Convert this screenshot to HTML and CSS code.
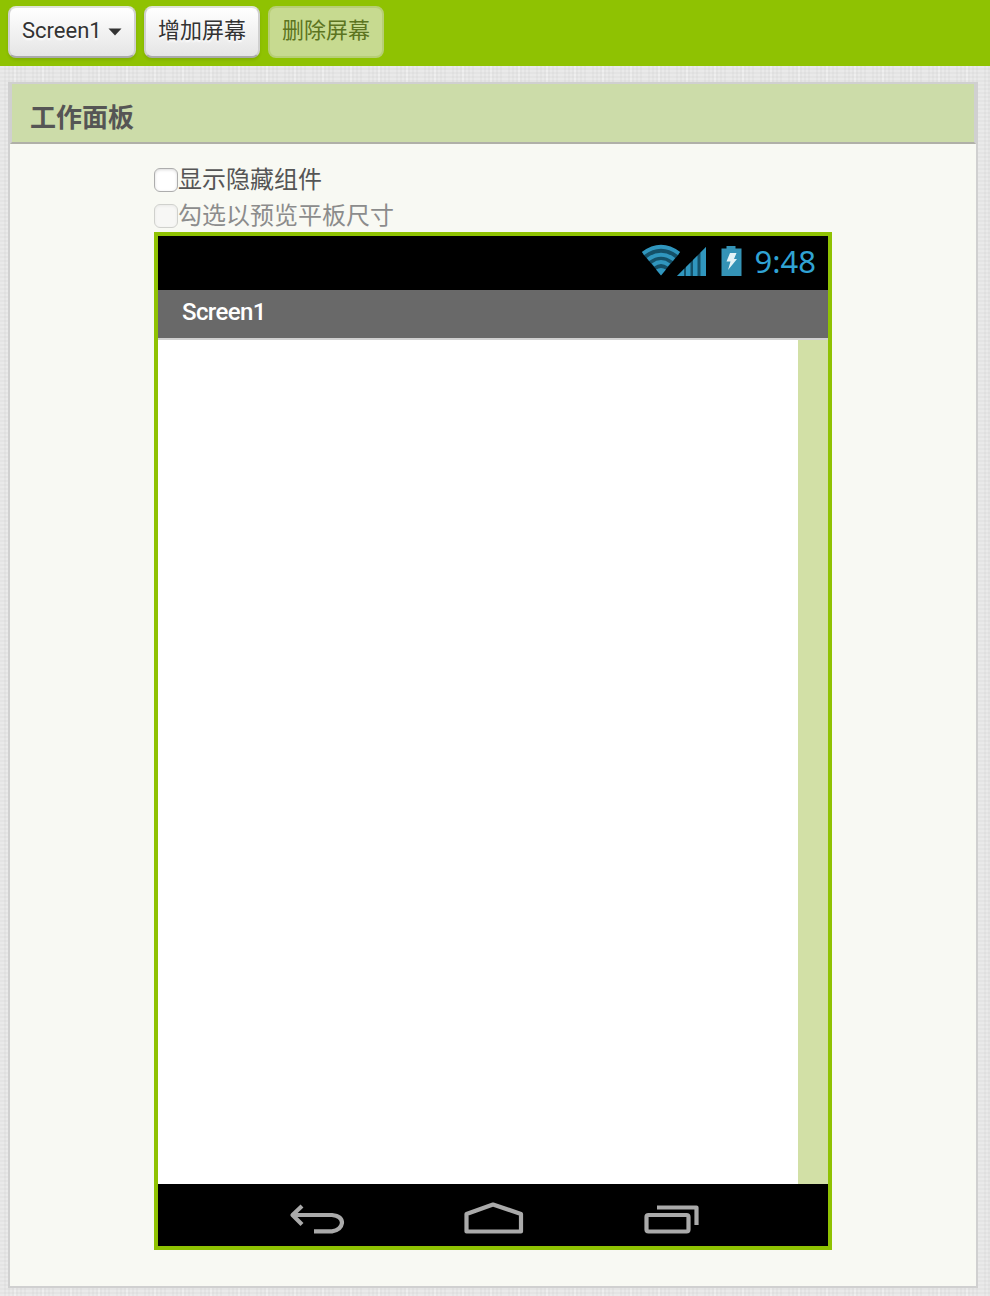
FILE: index.html
```html
<!DOCTYPE html>
<html lang="zh-CN">
<head>
<meta charset="utf-8">
<title>工作面板</title>
<link rel="stylesheet" href="styles.css">
</head>
<body>
<header class="toolbar">
  <button class="btn">Screen1<svg class="caret" width="14" height="8" viewBox="0 0 14 8"><path d="M0.5 0.5h13L7 7.5z" fill="#333"/></svg></button>
  <button class="btn">增加屏幕</button>
  <button class="btn btn-disabled" disabled>删除屏幕</button>
</header>
<main class="workspace">
  <section class="panel">
    <h1 class="panel-title">工作面板</h1>
    <div class="viewer">
      <label class="option"><input class="check" type="checkbox"><span>显示隐藏组件</span></label>
      <label class="option option-disabled"><input class="check" type="checkbox" disabled><span>勾选以预览平板尺寸</span></label>
      <div class="phone">
        <div class="status">
          <svg class="signals" width="104" height="36" viewBox="0 0 104 36">
            <path d="M4 11Q22 -3 40 11L22 32z" fill="#145068"/>
            <g fill="none" stroke="#3096be" stroke-width="4">
              <path d="M4 10.5Q22 -3 40 10.5"/>
              <path d="M9 16.5Q22 7 35 16.5"/>
              <path d="M14 22Q22 16 30 22"/>
            </g>
            <path d="M17 26.500Q22 23.500 27 26.500L22 32.500z" fill="#3096be"/>
            <path d="M38 33L67 4V33z" fill="#145068"/>
            <path d="M38 33L45 26V33zM47 24L51.500 19.500V33H47zM54 17L58.500 12.500V33H54zM61.500 9.500L67 4V33H61.500z" fill="#3096be"/>
            <path d="M82.500 5.500h5V3h9v2.500h6V33H82.500z" fill="#3493b6"/>
            <path d="M91 10h6.500l-2.500 6h3L89 27l2.500-8.500h-4z" fill="#e4f3f6"/>
          </svg>
          <span class="clock">9:48</span>
        </div>
        <div class="titlebar">Screen1</div>
        <div class="screen"><div class="canvas"></div><div class="scroll"></div></div>
        <div class="nav">
          <svg width="670" height="62" viewBox="0 0 670 62" fill="none" stroke="#aaa" stroke-width="4.200" stroke-linejoin="round">
            <path d="M144 22L134.500 31L144 40.500M136 31H174Q184 32 184 39Q183 46 174 47.300H156"/>
            <path d="M308.500 30L335 20.500L363 30V47.500H308.500z"/>
            <rect x="488.500" y="31" width="42" height="16.500" rx="2"/>
            <path d="M499 23.500H538.500V41"/>
          </svg>
        </div>
      </div>
    </div>
  </section>
</main>
</body>
</html>
```
FILE: styles.css
```css
* { box-sizing: border-box; }
body {
  margin: 0;
  height: 1296px;
  font-family: Roboto, "Noto Sans CJK SC", sans-serif;
  background-color: #eaeaea;
  background-image:
    linear-gradient(90deg, rgba(0,0,0,.025) 2px, transparent 2px),
    linear-gradient(rgba(0,0,0,.025) 2px, transparent 2px),
    linear-gradient(90deg, rgba(255,255,255,.25) 2px, transparent 2px);
  background-size: 4px 4px, 4px 4px, 14px 6px;
}
.toolbar {
  display: flex;
  gap: 8px;
  height: 66px;
  padding: 6px 8px;
  background: #8fc202;
}
.btn {
  display: flex;
  align-items: center;
  height: 52px;
  padding: 0 12px 2px;
  border: 2px solid #d0d0d0;
  border-top-color: #dfe3d7;
  border-bottom-color: #aaa;
  border-radius: 8px;
  background: linear-gradient(#fff, #e5e5e5);
  box-shadow: 0 2px 3px rgba(0,0,0,.1);
  color: #333;
  font: 22px/32px Roboto, "Noto Sans CJK SC", sans-serif;
  text-shadow: 0 2px 2px #fff;
  white-space: nowrap;
}
.btn:first-child { width: 128px; }
.caret { flex: none; margin: 2px 0 0 6px; }
.btn-disabled {
  background: #c7da90;
  border-color: #b7ce76;
  color: #5c7420;
  box-shadow: none;
  text-shadow: none;
}
.workspace { padding: 16px 12px 8px 8px; }
.panel {
  height: 1206px;
  border: 2px solid #d0d0d0;
  background: #f8f9f3;
}
.panel-title {
  margin: 0;
  height: 60px;
  padding: 14px 18px 0;
  border: 2px solid #d0d0d0;
  border-width: 0 2px 2px;
  border-bottom-color: #b0b0a8;
  background: #ccdca9;
  color: #555;
  font-size: 26px;
  line-height: 40px;
  font-weight: 700;
}
.viewer { width: 678px; margin: 18px 0 0 144px; }
.option {
  display: flex;
  align-items: center;
  height: 36px;
  color: #555;
  font-size: 24px;
  line-height: 36px;
}
.option + .option { height: 34px; }
.option-disabled { color: #8c8c8c; }
.option-disabled span { padding-top: 2px; }
.check {
  appearance: none;
  width: 24px;
  height: 24px;
  margin: 0;
  border: 1.500px solid #adadad;
  border-radius: 6px;
  background: #fff;
  box-shadow: inset 0 1px 3px rgba(0,0,0,.15);
}
.option-disabled .check {
  margin-top: 2px;
  border-color: #d0d1cd;
  background: #f7f7f5;
  box-shadow: inset 0 1px 3px rgba(0,0,0,.06);
}
.phone { border: 4px solid #8fc202; height: 1018px; }
.status {
  display: flex;
  height: 54px;
  padding: 7px 12px 0 0;
  justify-content: flex-end;
  background: #000;
}
.signals { margin-right: 11px; }
.clock {
  color: #30a3d4;
  font: 31px/37px "Noto Sans", sans-serif;
}
.titlebar {
  height: 50px;
  padding-left: 24px;
  border-bottom: 2px solid #d0d0d0;
  background: #696969;
  color: #fff;
  font-size: 24px;
  line-height: 45px;
  font-weight: 500;
  letter-spacing: -.6px;
}
.screen { display: flex; height: 844px; }
.canvas { flex: 1; background: #fff; }
.scroll { width: 30px; background: #d2e0a6; }
.nav { height: 62px; background: #000; }
.nav svg { display: block; }
```
